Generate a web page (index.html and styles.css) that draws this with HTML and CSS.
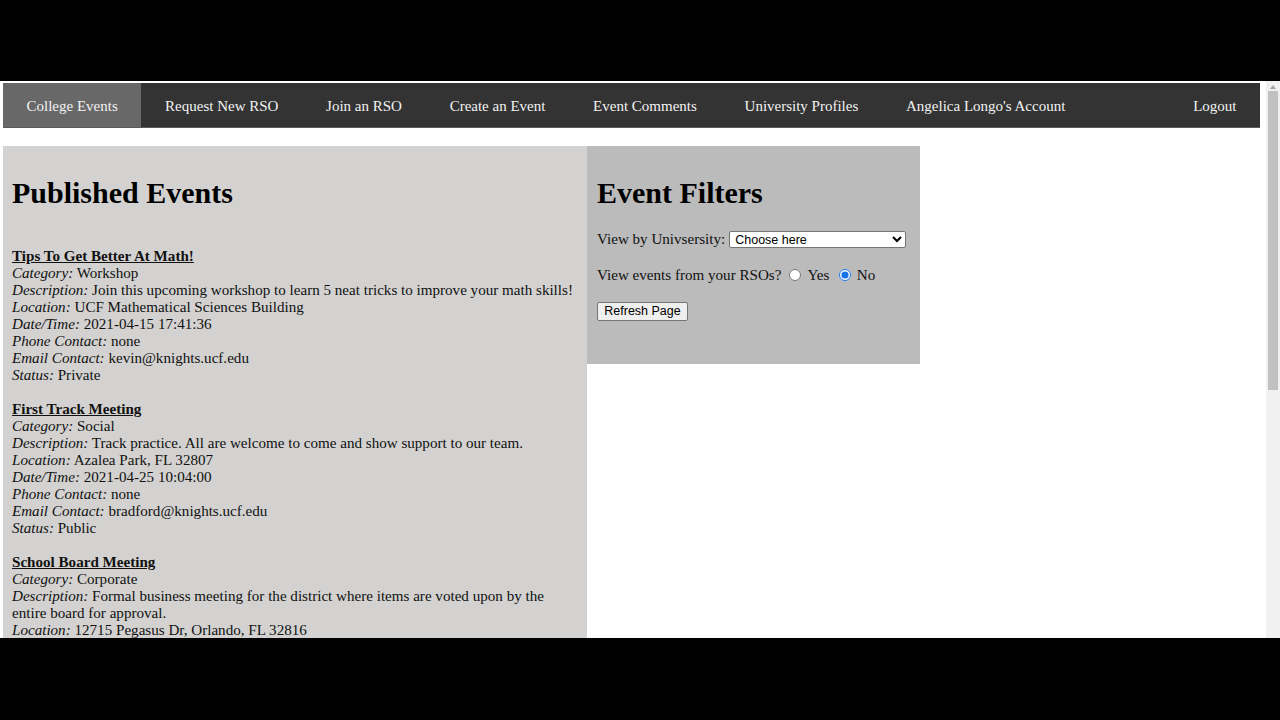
FILE: index.html
```html
<!DOCTYPE html>
<html>
<head>
<meta charset="utf-8">
<title>College Events</title>
<link rel="stylesheet" href="styles.css">
</head>
<body>
<div class="frame">
  <div class="letterbox"></div>
  <div class="viewport">
    <div class="page">
      <nav class="topnav">
        <a class="nav-item active" href="#">College Events</a>
        <a class="nav-item" href="#">Request New RSO</a>
        <a class="nav-item" href="#">Join an RSO</a>
        <a class="nav-item" href="#">Create an Event</a>
        <a class="nav-item" href="#">Event Comments</a>
        <a class="nav-item" href="#">University Profiles</a>
        <a class="nav-item" href="#">Angelica Longo's Account</a>
        <a class="nav-item logout" href="#">Logout</a>
      </nav>
      <div class="main">
        <section class="events">
          <h1 class="panel-title">Published Events</h1>
          <div class="event">
            <div class="event-title">Tips To Get Better At Math!</div>
            <div><i>Category:</i> Workshop</div>
            <div><i>Description:</i> Join this upcoming workshop to learn 5 neat tricks to improve your math skills!</div>
            <div><i>Location:</i> UCF Mathematical Sciences Building</div>
            <div><i>Date/Time:</i> 2021-04-15 17:41:36</div>
            <div><i>Phone Contact:</i> none</div>
            <div><i>Email Contact:</i> kevin@knights.ucf.edu</div>
            <div><i>Status:</i> Private</div>
          </div>
          <div class="event">
            <div class="event-title">First Track Meeting</div>
            <div><i>Category:</i> Social</div>
            <div><i>Description:</i> Track practice. All are welcome to come and show support to our team.</div>
            <div><i>Location:</i> Azalea Park, FL 32807</div>
            <div><i>Date/Time:</i> 2021-04-25 10:04:00</div>
            <div><i>Phone Contact:</i> none</div>
            <div><i>Email Contact:</i> bradford@knights.ucf.edu</div>
            <div><i>Status:</i> Public</div>
          </div>
          <div class="event">
            <div class="event-title">School Board Meeting</div>
            <div><i>Category:</i> Corporate</div>
            <div><i>Description:</i> Formal business meeting for the district where items are voted upon by the entire board for approval.</div>
            <div><i>Location:</i> 12715 Pegasus Dr, Orlando, FL 32816</div>
          </div>
        </section>
        <section class="filters">
          <h1 class="panel-title">Event Filters</h1>
          <div class="filter-rows">
            <div class="row">
              <label for="uni">View by Univsersity:</label>
              <select id="uni" class="uni-select"><option>Choose here</option></select>
            </div>
            <div class="row">
              <span>View events from your RSOs?</span>
              <input type="radio" name="rso" id="yes" class="radio"><label for="yes">Yes</label>
              <input type="radio" name="rso" id="no" class="radio radio-no" checked><label for="no">No</label>
            </div>
            <div class="row">
              <button class="refresh">Refresh Page</button>
            </div>
          </div>
        </section>
      </div>
    </div>
    <div class="scrollbar">
      <div class="scroll-arrow"></div>
      <div class="scroll-thumb"></div>
    </div>
  </div>
  <div class="letterbox bottom"></div>
</div>
</body>
</html>
```
FILE: styles.css
```css
* { box-sizing: border-box; }
html, body { margin: 0; padding: 0; background: #000; }
body { font-family: "Liberation Serif", "Times New Roman", serif; font-size: 15.1px; line-height: 17px; color: #111; }

.frame { width: 1280px; height: 720px; display: flex; flex-direction: column; overflow: hidden; }
.letterbox { height: 81px; background: #000; flex: none; }
.letterbox.bottom { height: 82px; }

.viewport { height: 557px; background: #fff; display: flex; overflow: hidden; flex: none; }
.page { flex: 1; padding: 2px 6px 0 3px; overflow: hidden; }

.topnav { display: flex; height: 45px; background: #333; border-bottom: 1px solid #5a5a5a; }
.nav-item { display: block; padding: 0 23.85px; line-height: 46px; color: #f2f2f2; text-decoration: none; font-size: 15px; white-space: nowrap; }
.nav-item.active { background: #686868; padding: 0 23.5px; }
.nav-item.logout { margin-left: auto; padding-right: 23.5px; }

.main { display: flex; align-items: flex-start; margin-top: 18px; }

.events { width: 584px; background: #d3d2d0; padding: 9px 9px 40px 9px; flex: none; }
.filters { width: 333px; height: 218px; background: #bbbbbb; padding: 9px 10px 0 10px; flex: none; }

.panel-title { font-size: 30px; line-height: 35px; margin: 20px 0; font-weight: bold; color: #000; }
.events .panel-title { margin-bottom: 21px; }

.event { padding-top: 17px; }
.event-title { font-weight: bold; text-decoration: underline; }

.filter-rows { display: flex; flex-direction: column; gap: 17px; margin-top: -0.5px; }
.row { height: 19px; display: flex; align-items: center; white-space: nowrap; }
.uni-select { margin-left: 4px; width: 177px; height: 17px; font-family: Arial, "Liberation Sans", sans-serif; font-size: 12.5px; padding: 0 0 0 1px; border: 1px solid #767676; border-radius: 2px; background: #fff; color: #000; }
.radio { width: 12px; height: 12px; margin: 0 6px 0 8px; accent-color: #1a73e8; }
.radio-no { margin-left: 9.5px; }
.refresh { width: 91px; height: 19px; font-family: Arial, "Liberation Sans", sans-serif; font-size: 12.5px; padding: 0; background: #efefef; border: 1px solid #767676; border-radius: 2px; color: #000; }

.scrollbar { width: 14px; background: #f1f1f1; flex: none; display: flex; flex-direction: column; align-items: center; }
.scroll-arrow { width: 0; height: 0; margin-top: 4px; border-left: 3.5px solid transparent; border-right: 3.5px solid transparent; border-bottom: 4px solid #a3a3a3; }
.scroll-thumb { width: 10px; height: 299px; margin-top: 2px; background: #c1c1c1; }
```
